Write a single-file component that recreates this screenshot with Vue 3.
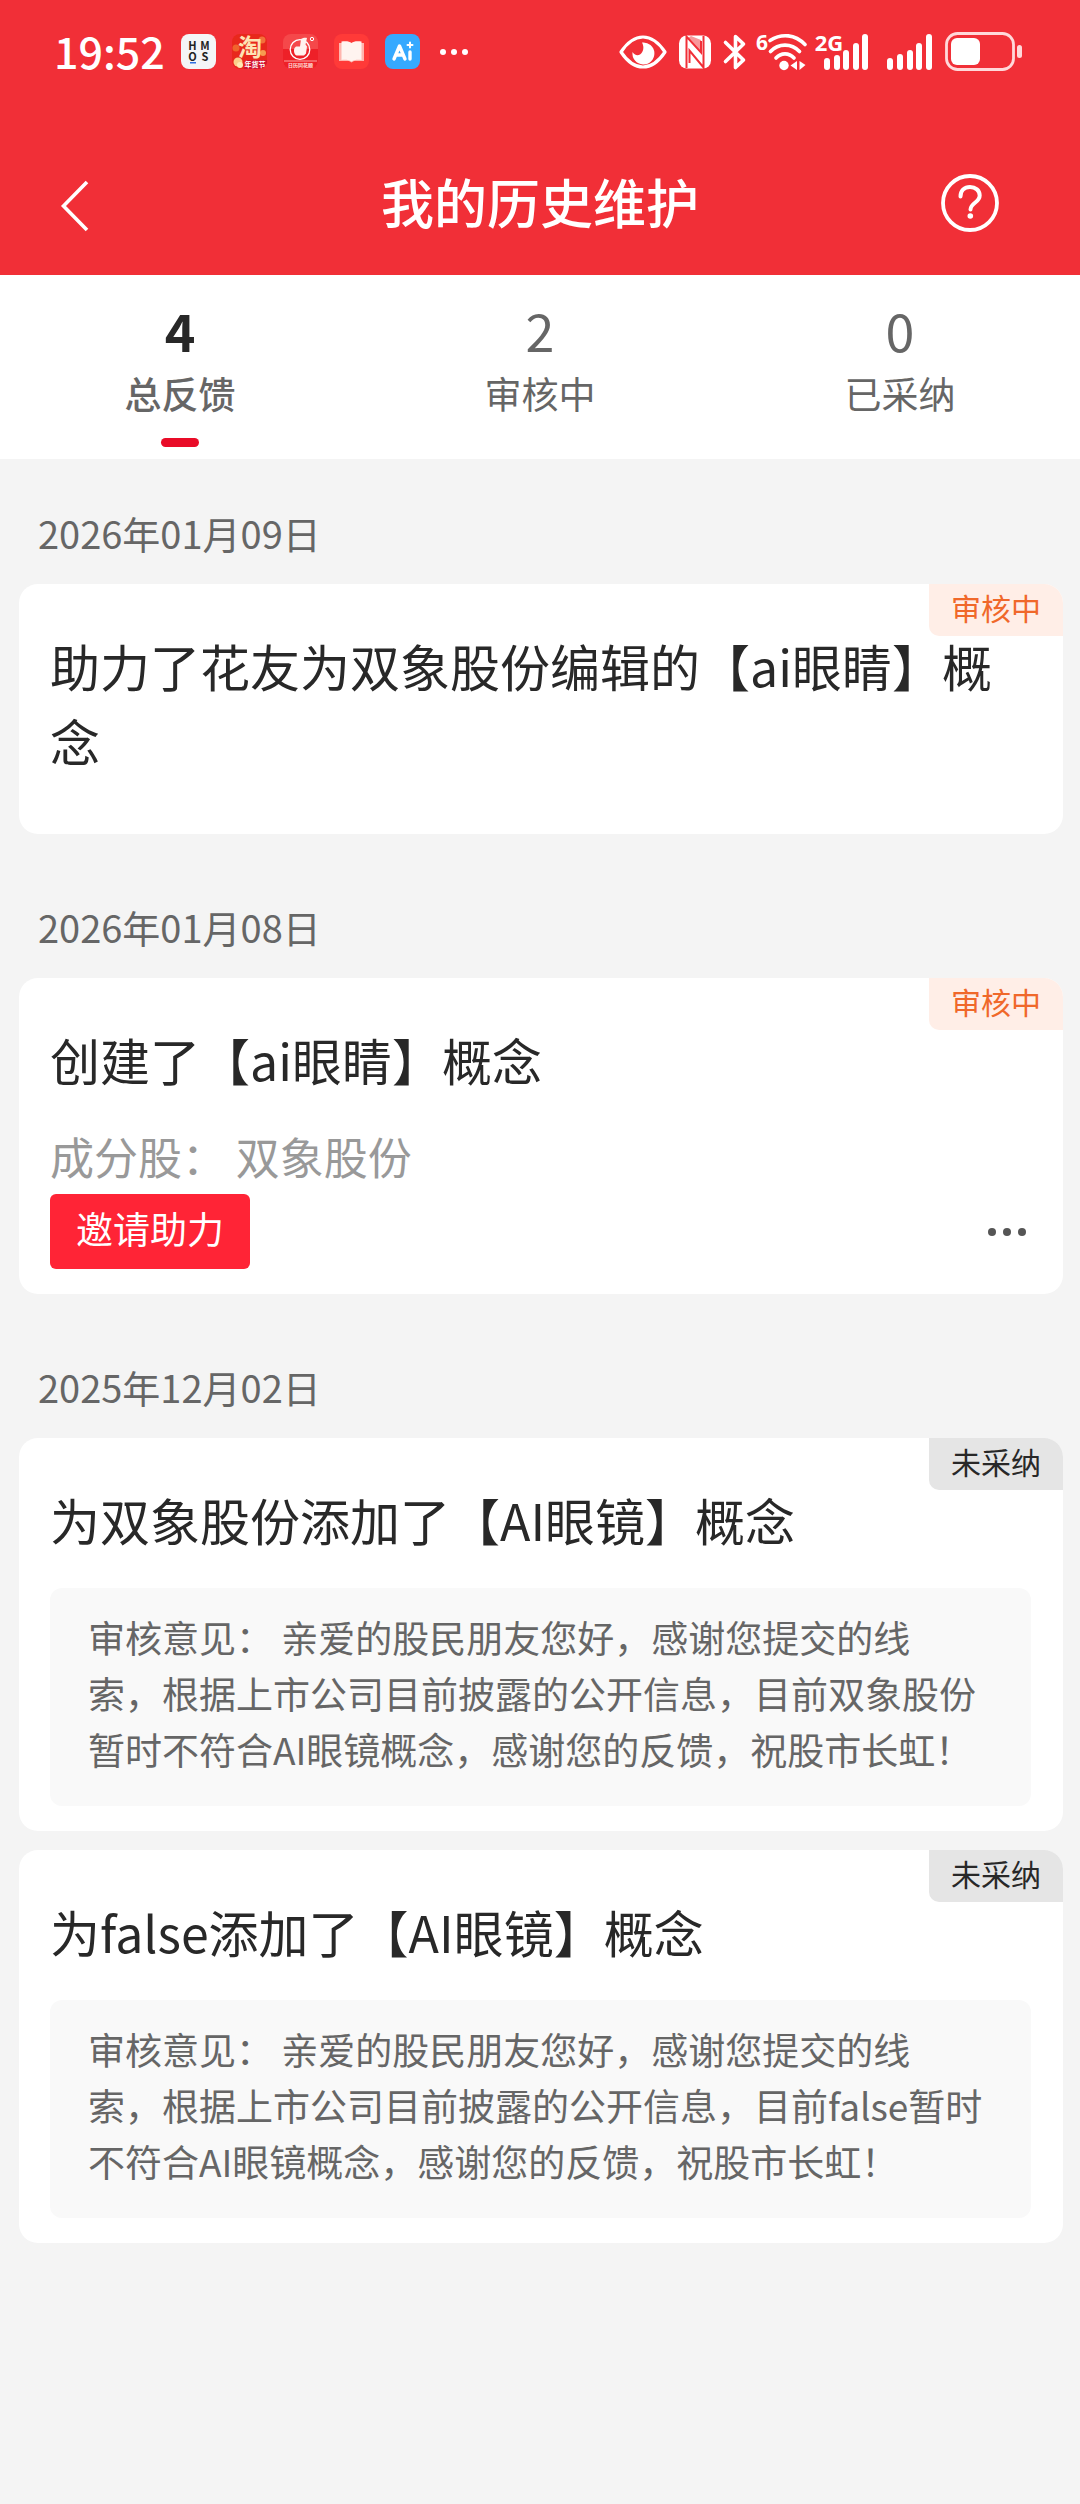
<template>
  <div class="page">
    <header class="header">
      <!-- System status bar -->
      <div class="status-bar">
        <div class="status-left">
          <span class="clock">19:52</span>
          <svg class="app-icon" viewBox="0 0 35 35">
            <rect width="35" height="35" rx="8" fill="#f4f5f7" />
            <g font-size="11" font-weight="700" fill="#222" text-anchor="middle">
              <text x="11.5" y="16">H</text>
              <text x="24" y="16">M</text>
              <text x="11.5" y="27">O</text>
              <text x="24" y="27">S</text>
            </g>
            <rect x="9" y="28" width="6" height="1.5" fill="#2f6fe0" />
          </svg>
          <svg class="app-icon" viewBox="0 0 35 35">
            <rect width="35" height="35" rx="8" fill="#e8281c" />
            <circle cx="4" cy="14" r="3.5" fill="#f0642c" />
            <circle cx="30" cy="6" r="3.5" fill="#f2703a" />
            <circle cx="31" cy="19" r="3" fill="#f79a50" />
            <text x="18" y="22" font-size="24" font-weight="700" fill="#fde3b4" text-anchor="middle">淘</text>
            <path d="M14 26h21v1a8 8 0 0 1-8 8H12z" fill="#d3122e" />
            <text x="23" y="33" font-size="7" font-weight="700" fill="#fff" text-anchor="middle">年货节</text>
            <circle cx="6" cy="28" r="4.5" fill="#fbd08a" />
            <circle cx="8" cy="31" r="3" fill="#ffe9b5" />
          </svg>
          <svg class="app-icon" viewBox="0 0 35 35">
            <rect width="35" height="35" rx="8" fill="#f5484a" />
            <path d="M0 15h35v12a8 8 0 0 1-8 8H8a8 8 0 0 1-8-8z" fill="#ee2028" />
            <circle cx="17" cy="15.5" r="9.8" fill="none" stroke="#fff" stroke-width="1.3" />
            <path d="M11.500 14l1.500-1.500h4l1-7.500c2-1.500 5-1.500 6-1l-1.500 6.500 1.500 2-1 7-2 2h-7.500c-2.500-1-3-5-2-7.500z" fill="#fff3ef" />
            <circle cx="29" cy="5" r="1.700" fill="none" stroke="#fff" />
            <path d="M1 27h33" stroke="#ffc4bf" stroke-width="0.8" />
            <text x="17.5" y="33" font-size="5" font-weight="700" fill="#ffe1df" text-anchor="middle">日历同花顺</text>
          </svg>
          <svg class="app-icon" viewBox="0 0 35 35">
            <rect width="35" height="35" rx="8" fill="#ff3a38" />
            <path d="M5 9h25v18H20l-2.500 1.500L15 27H5z" fill="#ffb5ae" />
            <path d="M7.500 7.500c4-.5 8-.5 10 1.500 2-2 6-2 10-1.500V26c-4-.5-8 0-10 1.500-2-1.500-6-2-10-1.500z" fill="#fff4f0" />
          </svg>
          <svg class="app-icon" viewBox="0 0 35 35">
            <rect width="35" height="35" rx="8" fill="#36a9ff" />
            <path d="M9 25l5.500-13L20 25M11.500 21h6M25 18v7" fill="none" stroke="#fff" stroke-width="3.400" stroke-linecap="round" stroke-linejoin="round" />
            <path d="M25 8.500v5M22.500 11h5" stroke="#fff" stroke-width="2" stroke-linecap="round" />
          </svg>
          <svg class="status-dots" viewBox="0 0 30 8">
            <circle cx="4" cy="4" r="3" />
            <circle cx="15" cy="4" r="3" />
            <circle cx="26" cy="4" r="3" />
          </svg>
        </div>

        <div class="status-right">
          <svg class="eye" viewBox="0 0 48 34">
            <path d="M2 17C9 6.500 16 2 24 2s15 4.500 22 15C39 27.500 32 32 24 32S9 27.500 2 17z" fill="none" stroke="#fff" stroke-width="3.200" stroke-linejoin="round" />
            <path d="M23 7.500A11 11 0 1 1 13.500 17c1.500 3 5 4 7.500 2.500 3.500-2.500 4.500-7.500 2-12z" fill="#fff" />
          </svg>
          <svg class="nfc" viewBox="0 0 32 34">
            <rect y="0.5" width="32" height="33" rx="8" fill="#fff" />
            <path d="M7.500 33V1.500L22 17.500V6" fill="none" stroke="#f12f37" stroke-width="2" />
            <path d="M10.500 28V15.500L24.500 32.500V1" fill="none" stroke="#f12f37" stroke-width="2" />
            <path d="M12 1l10 4v12.500L9 3z" fill="#f12f37" opacity="0.5" />
          </svg>
          <svg class="bluetooth" viewBox="0 0 24 36">
            <path d="M2.500 8.500L20.500 26l-8 7.500V2.500l8 7.500L2.500 27.500" fill="none" stroke="#fff" stroke-width="3.600" stroke-linecap="round" stroke-linejoin="round" />
          </svg>
          <svg class="wifi" viewBox="0 0 50 38">
            <text x="5" y="17" font-size="21" font-weight="700" fill="#fff" text-anchor="middle" class="net-label">6</text>
            <g fill="none" stroke="#fff" stroke-width="3.700" stroke-linecap="round">
              <path d="M13 7.500c12-7.500 25-6 35 4" />
              <path d="M13.500 18.500c8-8.500 21-8.500 29 0" />
              <path d="M19 25c5-5.500 13-5.500 18 0" />
            </g>
            <circle cx="27" cy="32.500" r="4.700" fill="#fff" />
            <path d="M40 28v9l-6.500-4.500zM42.500 28l6 4-6 5z" fill="#fff" />
          </svg>
          <svg class="signal-net" viewBox="0 0 52 38">
            <text x="12" y="18" font-size="22" font-weight="700" fill="#fff" text-anchor="middle" class="net-label">2G</text>
            <g fill="#fff">
              <rect x="7" y="25" width="6" height="12" rx="3" />
              <rect x="17" y="22" width="6" height="15" rx="3" />
              <rect x="26" y="17" width="6" height="20" rx="3" />
              <rect x="36" y="10" width="6" height="27" rx="3" />
              <rect x="45" y="1" width="6" height="36" rx="3" />
            </g>
          </svg>
          <svg class="signal" viewBox="0 0 46 38">
            <g fill="#fff">
              <rect x="0" y="25" width="6" height="12" rx="3" />
              <rect x="10" y="21" width="6" height="16" rx="3" />
              <rect x="20" y="17" width="6" height="20" rx="3" />
              <rect x="29" y="10" width="6" height="27" rx="3" />
              <rect x="39" y="1" width="6" height="36" rx="3" />
            </g>
          </svg>
          <svg class="battery" viewBox="0 0 78 40">
            <rect x="1.5" y="1.5" width="67" height="36" rx="11" fill="none" stroke="#ffd9da" stroke-width="2.800" />
            <rect x="6" y="6" width="29" height="27" rx="6" fill="#fff" />
            <rect x="72" y="13" width="5" height="13" rx="2.500" fill="#ffd9da" />
          </svg>
        </div>
      </div>

      <!-- Title bar -->
      <nav class="nav">
        <button class="icon-btn back" type="button" aria-label="返回">
          <svg viewBox="0 0 30 50">
            <path d="M26 1L2.500 25 26 49" fill="none" stroke="#fff" stroke-width="3.600" />
          </svg>
        </button>
        <h1 class="nav-title">我的历史维护</h1>
        <button class="icon-btn help" type="button" aria-label="帮助">
          <svg viewBox="0 0 58 58">
            <circle cx="29" cy="29" r="27" fill="none" stroke="#fff" stroke-width="3.800" />
            <path d="M19.500 22.500c0-6 4-9.500 9.500-9.500s9.700 3.500 9.700 8.500c0 7-9.200 7.500-9.200 14" fill="none" stroke="#fff" stroke-width="4" stroke-linecap="round" />
            <circle cx="29.300" cy="42" r="2.800" fill="#fff" />
          </svg>
        </button>
      </nav>
    </header>

    <div class="tabs" role="tablist">
      <button
        v-for="(tab, index) in tabs"
        :key="tab.label"
        type="button"
        role="tab"
        class="tab"
        :class="{ active: index === activeTab }"
        :aria-selected="index === activeTab"
        @click="activeTab = index"
      >
        <span class="tab-count">{{ tab.count }}</span>
        <span class="tab-label">{{ tab.label }}</span>
        <span class="tab-line"></span>
      </button>
    </div>

    <main class="list">
      <section v-for="group in groups" :key="group.date" class="group">
        <h2 class="date">{{ group.date }}</h2>
        <article v-for="item in group.items" :key="item.title" class="card">
          <span class="badge" :class="item.status">{{ statusText[item.status] }}</span>
          <h3 class="card-title" :class="{ plain: !item.stock && !item.opinion }">{{ item.title }}</h3>

          <template v-if="item.stock">
            <p class="stock">成分股： {{ item.stock }}</p>
            <div class="actions">
              <button class="invite" type="button">邀请助力</button>
              <button class="more" type="button" aria-label="更多">
                <svg viewBox="0 0 38 8">
                  <circle cx="4" cy="4" r="4" />
                  <circle cx="19" cy="4" r="4" />
                  <circle cx="34" cy="4" r="4" />
                </svg>
              </button>
            </div>
          </template>

          <p v-if="item.opinion" class="opinion">审核意见： {{ item.opinion }}</p>
        </article>
      </section>
    </main>
  </div>
</template>

<script setup>
import { ref } from 'vue'

const activeTab = ref(0)

const tabs = [
  { count: 4, label: '总反馈' },
  { count: 2, label: '审核中' },
  { count: 0, label: '已采纳' }
]

const statusText = {
  pending: '审核中',
  rejected: '未采纳'
}

function rejectOpinion(name) {
  return `亲爱的股民朋友您好，感谢您提交的线\n索，根据上市公司目前披露的公开信息，目前${name}暂时不符合AI眼镜概念，感谢您的反馈，祝股市长虹！`
}

const groups = [
  {
    date: '2026年01月09日',
    items: [
      { status: 'pending', title: '助力了花友为双象股份编辑的【ai眼睛】概念' }
    ]
  },
  {
    date: '2026年01月08日',
    items: [
      { status: 'pending', title: '创建了【ai眼睛】概念', stock: '双象股份' }
    ]
  },
  {
    date: '2025年12月02日',
    items: [
      { status: 'rejected', title: '为双象股份添加了【AI眼镜】概念', opinion: rejectOpinion('双象股份') },
      { status: 'rejected', title: '为false添加了【AI眼镜】概念', opinion: rejectOpinion('false') }
    ]
  }
]
</script>

<style>
body {
  background: #f4f4f4;
}
</style>

<style scoped>
.page {
  min-height: 100vh;
  background: #f4f4f4;
  color: #282828;
  font-family: "Noto Sans CJK SC", "Noto Sans", sans-serif;
}

h1, h2, h3, p {
  margin: 0;
  font-weight: 400;
}

button {
  padding: 0;
  border: 0;
  background: none;
  font-family: inherit;
  color: inherit;
  cursor: pointer;
}

svg {
  display: block;
  overflow: visible;
}

.header {
  background: #f12f37;
  color: #fff;
}

/* status bar */
.status-bar {
  display: flex;
  justify-content: space-between;
  align-items: center;
  height: 103px;
  padding: 0 57px 0 54px;
}

.status-left,
.status-right {
  display: flex;
  align-items: center;
}

.status-left {
  gap: 16px;
}

.clock {
  padding-bottom: 3px;
  font-size: 43px;
  line-height: 52px;
  font-weight: 500;
}

.app-icon {
  width: 35px;
  height: 35px;
}

.status-dots {
  width: 30px;
  height: 8px;
  margin-left: 3px;
  fill: #fff;
}

.status-right {
  gap: 12px;
}

.eye { width: 48px; height: 34px; }
.nfc { width: 32px; height: 34px; }
.bluetooth { width: 24px; height: 36px; }
.wifi { width: 50px; height: 38px; margin-left: -2px; }
.signal-net { width: 52px; height: 38px; margin-left: -2px; }
.signal { width: 46px; height: 38px; margin-left: 6px; }
.battery { width: 78px; height: 40px; }

.net-label {
  font-family: "Open Sans", "Liberation Sans", sans-serif;
}

/* title bar */
.nav {
  display: grid;
  grid-template-columns: 1fr auto 1fr;
  align-items: center;
  height: 144px;
  margin-top: 28px;
  padding: 0 61px;
}

.nav-title {
  padding-bottom: 4px;
  font-size: 53px;
  line-height: 72px;
  font-weight: 500;
}

.back {
  padding-top: 6px;
}

.back svg {
  width: 30px;
  height: 50px;
}

.help {
  justify-self: end;
  margin-right: 20px;
}

.help svg {
  width: 58px;
  height: 58px;
}

/* tabs */
.tabs {
  display: grid;
  grid-template-columns: repeat(3, 1fr);
  background: #fff;
}

.tab {
  display: flex;
  flex-direction: column;
  align-items: center;
  padding: 25px 0 12px;
  color: #666;
}

.tab-count {
  font-size: 52px;
  line-height: 60px;
}

.tab-label {
  margin-top: 5px;
  font-size: 37px;
  line-height: 56px;
}

.tab-line {
  width: 38px;
  height: 9px;
  margin-top: 17px;
  border-radius: 5px;
}

.tab.active .tab-count {
  color: #282828;
  font-weight: 700;
}

.tab.active .tab-label {
  font-weight: 500;
}

.tab.active .tab-line {
  background: #e90c28;
}

/* records */
.list {
  padding: 0 17px 0 19px;
}

.date {
  padding: 44px 19px 21px;
  font-size: 38px;
  line-height: 60px;
  color: #666;
}

.card {
  position: relative;
  margin-bottom: 19px;
  padding: 44px 32px 25px 31px;
  border-radius: 19px;
  background: #fff;
  overflow: hidden;
}

.badge {
  position: absolute;
  top: 0;
  right: 0;
  padding: 0 22px 6px;
  border-bottom-left-radius: 10px;
  font-size: 30px;
  line-height: 46px;
}

.badge.pending {
  background: #ffeee7;
  color: #f0682a;
}

.badge.rejected {
  background: #e5e5e5;
  color: #282828;
}

.card-title {
  font-size: 50px;
  line-height: 75px;
}

.card-title.plain {
  margin-bottom: 31px;
}

.stock {
  margin-top: 29px;
  font-size: 44px;
  line-height: 60px;
  color: #999;
}

.actions {
  display: flex;
  justify-content: space-between;
  align-items: center;
  margin-top: 8px;
}

.invite {
  padding: 6px 26px 13px;
  border-radius: 6px;
  background: #ff2436;
  color: #fff;
  font-size: 37px;
  line-height: 56px;
}

.more {
  padding: 20px 5px;
}

.more svg {
  width: 38px;
  height: 8px;
  fill: #555;
}

.opinion {
  margin-top: 31px;
  padding: 21px 36px 29px 38px;
  border-radius: 12px;
  background: #f9f9f9;
  color: #666;
  font-size: 37px;
  line-height: 56px;
  white-space: pre-line;
}
</style>
